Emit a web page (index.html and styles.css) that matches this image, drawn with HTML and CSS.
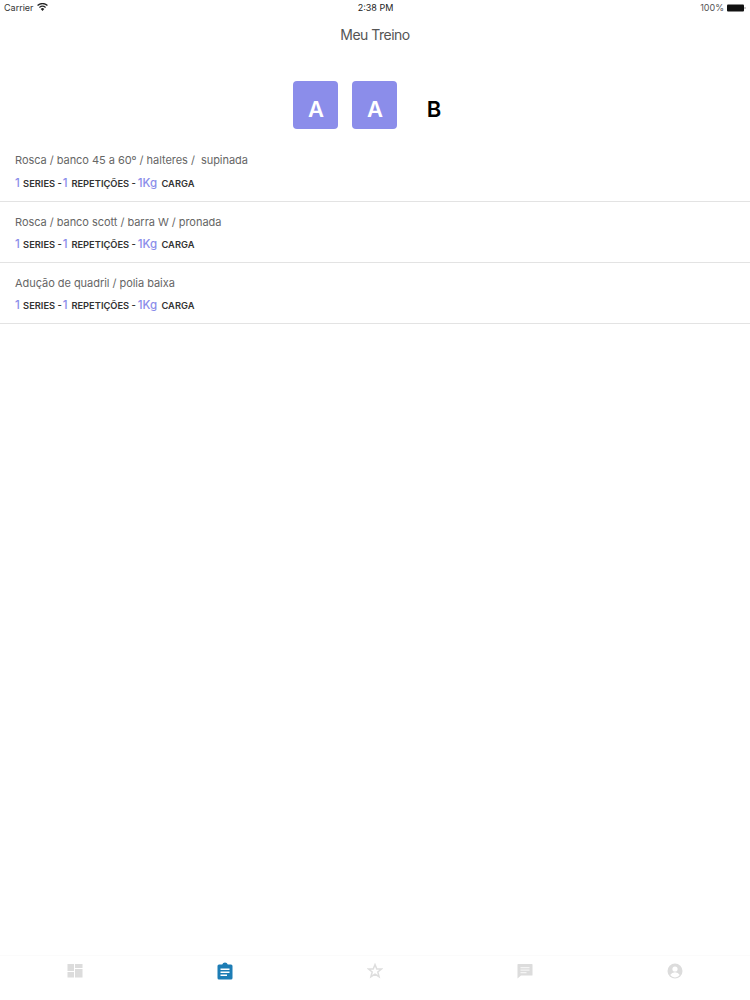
FILE: index.html
```html
<!DOCTYPE html>
<html lang="pt">
<head>
<meta charset="utf-8">
<title>Meu Treino</title>
<link rel="stylesheet" href="styles.css">
</head>
<body>
<div class="app">
  <div class="status">
    <div class="status-left"><span>Carrier</span>
      <svg class="wifi" width="11" height="8" viewBox="0 0 11 8"><path d="M5.5 8 3.7 5.9a2.700 2.700 0 0 1 3.600 0z" fill="#222"/><path d="M2.800 4.900a4.200 4.200 0 0 1 5.400 0l.8-.9a5.500 5.500 0 0 0-7 0z" fill="#222"/><path d="M1 2.900a6.900 6.900 0 0 1 9 0l.9-1a8.200 8.200 0 0 0-10.800 0z" fill="#222"/></svg>
    </div>
    <div class="status-time">2:38 PM</div>
    <div class="status-right"><span>100%</span>
      <svg width="19" height="8" viewBox="0 0 19 8"><rect x="0" y="0.5" width="17" height="7" rx="1" fill="#111"/><rect x="17.500" y="3" width="1" height="2" fill="#999"/></svg>
    </div>
  </div>
  <header class="nav">Meu Treino</header>
  <div class="tabs">
    <div class="tab tab-on">A</div>
    <div class="tab tab-on">A</div>
    <div class="tab">B</div>
  </div>
  <ul class="list">
    <li class="row">
      <div class="name">Rosca / banco 45 a 60º / halteres /&nbsp; supinada</div>
      <div class="meta"><b class="n">1</b> SERIES -<b class="n">1</b> REPETIÇÕES -<b class="n n-kg">1Kg</b> CARGA</div>
    </li>
    <li class="row">
      <div class="name">Rosca / banco scott / barra W / pronada</div>
      <div class="meta"><b class="n">1</b> SERIES -<b class="n">1</b> REPETIÇÕES -<b class="n n-kg">1Kg</b> CARGA</div>
    </li>
    <li class="row">
      <div class="name">Adução de quadril / polia baixa</div>
      <div class="meta"><b class="n">1</b> SERIES -<b class="n">1</b> REPETIÇÕES -<b class="n n-kg">1Kg</b> CARGA</div>
    </li>
  </ul>
  <nav class="bar">
    <div class="bar-item"><svg width="16" height="16" viewBox="0 0 16 16" fill="#dcdcdc"><rect x="0.5" y="1" width="6.500" height="7"/><rect x="8" y="1" width="7.500" height="4"/><rect x="0.5" y="9" width="6.500" height="5.500"/><rect x="8" y="6" width="7.500" height="8.500"/></svg></div>
    <div class="bar-item"><svg width="16" height="18" viewBox="0 0 16 18"><path d="M2 2.500h3.200a3 3 0 0 1 5.600 0H14a1.500 1.500 0 0 1 1.500 1.500v12a1.500 1.500 0 0 1-1.500 1.500H2A1.500 1.500 0 0 1 .5 16V4A1.500 1.500 0 0 1 2 2.500z" fill="#1d7db5"/><path d="M3.500 6.500h9v1.500h-9zM3.500 9.500h9V11h-9zM3.500 12.500h6.500V14H3.500z" fill="#fff"/></svg></div>
    <div class="bar-item"><svg width="16" height="16" viewBox="0 0 16 16"><path d="M8 1.600 9.800 6h4.700l-3.700 3 1.300 4.700L8 11.100l-4.100 2.600L5.200 9 1.500 6h4.700z" fill="none" stroke="#dedede" stroke-width="1.500"/></svg></div>
    <div class="bar-item"><svg width="16" height="16" viewBox="0 0 16 16"><path d="M1 1h14a.5.5 0 0 1 .5.5v10.500a.5.5 0 0 1-.5.5H4l-3.500 3V1.500A.5.5 0 0 1 1 1z" fill="#dcdcdc"/><path d="M3.500 4h9v1.300h-9zM3.500 6.500h9v1.300h-9zM3.500 9h6v1.300h-6z" fill="#f4f4f4"/></svg></div>
    <div class="bar-item"><svg width="16" height="16" viewBox="0 0 16 16"><circle cx="8" cy="8" r="7.500" fill="#dcdcdc"/><circle cx="8" cy="6" r="2.600" fill="#fff"/><path d="M3.200 12a5.500 5.500 0 0 1 9.600 0 6 6 0 0 1-9.600 0z" fill="#fff"/></svg></div>
  </nav>
</div>
</body>
</html>
```
FILE: styles.css
```css
* { box-sizing: border-box; }
html, body { margin: 0; padding: 0; background: #fff; }
body { font-family: Inter, "Liberation Sans", sans-serif; }
.app { width: 750px; height: 1000px; display: flex; flex-direction: column; overflow: hidden; }
.status { height: 15px; padding: 0 4px; display: grid; grid-template-columns: 1fr auto 1fr; align-items: center; font-size: 9px; color: #333; }
.status-left { display: flex; align-items: center; gap: 3px; }
.status-right { display: flex; align-items: center; justify-content: flex-end; gap: 3px; color: #555; }
.wifi { margin-top: -1px; }
.status-time { color: #222; padding-left: 1px; }
.nav { height: 39px; display: flex; align-items: center; justify-content: center; font-size: 14px; letter-spacing: -0.5px; color: #555; }
.tabs { margin-top: 27px; padding-right: 1px; display: flex; justify-content: center; gap: 14px; }
.tab { width: 45px; height: 48px; padding: 7px 0 0 1px; border-radius: 4px; display: flex; align-items: center; justify-content: center; font-size: 22px; font-weight: 600; color: #000; }
.tab-on { background: #8b8dea; color: #fff; }
.list { list-style: none; margin: 12px 0 0; padding: 0; }
.row { height: 61.15px; padding: 12.4px 15px 0; border-bottom: 1px solid #e3e3e3; }
.name { font-size: 11px; line-height: 15px; letter-spacing: -0.04px; color: #666; }
.meta { margin-top: 7.8px; font-size: 9.300px; line-height: 14px; font-weight: 600; color: #333; }
.n { margin: 0 1.500px 0 1px; font-size: 11.500px; font-weight: 500; color: #8b8dea; }
.n:first-child { margin-left: 0; margin-right: 1px; }
.n-kg { margin: 0 2px 0 2px; }
.bar { margin-top: auto; height: 45px; padding-bottom: 15px; border-top: 1px solid #fbfbfb; display: grid; grid-template-columns: repeat(5, 1fr); }
.bar-item { display: flex; align-items: center; justify-content: center; }
```
